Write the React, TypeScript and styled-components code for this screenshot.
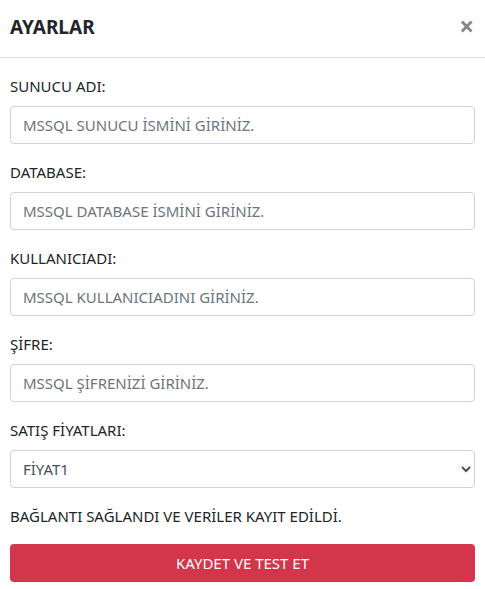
import React, { useState } from "react"
import styled, { createGlobalStyle } from "styled-components"

const GlobalStyle = createGlobalStyle`
  html, body {
    margin: 0;
    padding: 0;
    background: #fff;
  }
  body {
    font-family: "Noto Sans", "Open Sans", sans-serif;
    font-size: 15px;
    color: #212529;
  }
  * {
    box-sizing: border-box;
  }
`

const Modal = styled.div`
  width: 485px;
  background: #fff;
`

const Header = styled.div`
  height: 58px;
  display: flex;
  align-items: center;
  justify-content: space-between;
  padding: 0 10px 4px;
  border-bottom: 1px solid #dee2e6;
`

const Title = styled.h5`
  margin: 0;
  font-size: 19px;
  font-weight: 700;
  color: #212529;
`

const CloseButton = styled.button`
  border: none;
  background: none;
  padding: 0 1px 2px;
  font-family: inherit;
  font-size: 26px;
  font-weight: 700;
  line-height: 1;
  color: #888;
  cursor: pointer;
`

const Body = styled.form`
  padding: 17px 10px 7px;
`

const Group = styled.div`
  margin-bottom: 17px;
`

const Label = styled.label`
  display: block;
  margin-bottom: 9px;
  line-height: 22px;
`

const Input = styled.input`
  display: block;
  width: 100%;
  height: 38px;
  padding: 6px 12px;
  font-family: inherit;
  font-size: 15px;
  color: #495057;
  border: 1px solid #ced4da;
  border-radius: 4px;

  &::placeholder {
    color: #6c757d;
  }
`

const Select = styled.select`
  display: block;
  width: 100%;
  height: 38px;
  padding: 6px 8px;
  font-family: inherit;
  font-size: 15px;
  color: #495057;
  background: #fff;
  border: 1px solid #ced4da;
  border-radius: 4px;
`

const Status = styled.p`
  margin: 0 0 17px;
  line-height: 22px;
`

const SubmitButton = styled.button`
  display: block;
  width: 100%;
  height: 38px;
  font-family: inherit;
  font-size: 15px;
  color: #fff;
  background: #d3354a;
  border: none;
  border-radius: 4px;
  cursor: pointer;
`

const fields = [
  { label: "SUNUCU ADI:", placeholder: "MSSQL SUNUCU İSMİNİ GİRİNİZ." },
  { label: "DATABASE:", placeholder: "MSSQL DATABASE İSMİNİ GİRİNİZ." },
  { label: "KULLANICIADI:", placeholder: "MSSQL KULLANICIADINI GİRİNİZ." },
  { label: "ŞİFRE:", placeholder: "MSSQL ŞİFRENİZİ GİRİNİZ.", type: "password" },
]

const App: React.FC = () => {
  const [price, setPrice] = useState("FIYAT1")

  return (
    <>
      <GlobalStyle />
      <Modal>
        <Header>
          <Title>AYARLAR</Title>
          <CloseButton type="button">×</CloseButton>
        </Header>
        <Body onSubmit={(e) => e.preventDefault()}>
          {fields.map((f) => (
            <Group key={f.label}>
              <Label>{f.label}</Label>
              <Input type={f.type || "text"} placeholder={f.placeholder} />
            </Group>
          ))}
          <Group>
            <Label>SATIŞ FİYATLARI:</Label>
            <Select value={price} onChange={(e) => setPrice(e.target.value)}>
              <option value="FIYAT1">FİYAT1</option>
              <option value="FIYAT2">FİYAT2</option>
              <option value="FIYAT3">FİYAT3</option>
            </Select>
          </Group>
          <Status>BAĞLANTI SAĞLANDI VE VERİLER KAYIT EDİLDİ.</Status>
          <SubmitButton type="submit">KAYDET VE TEST ET</SubmitButton>
        </Body>
      </Modal>
    </>
  )
}

export default App
